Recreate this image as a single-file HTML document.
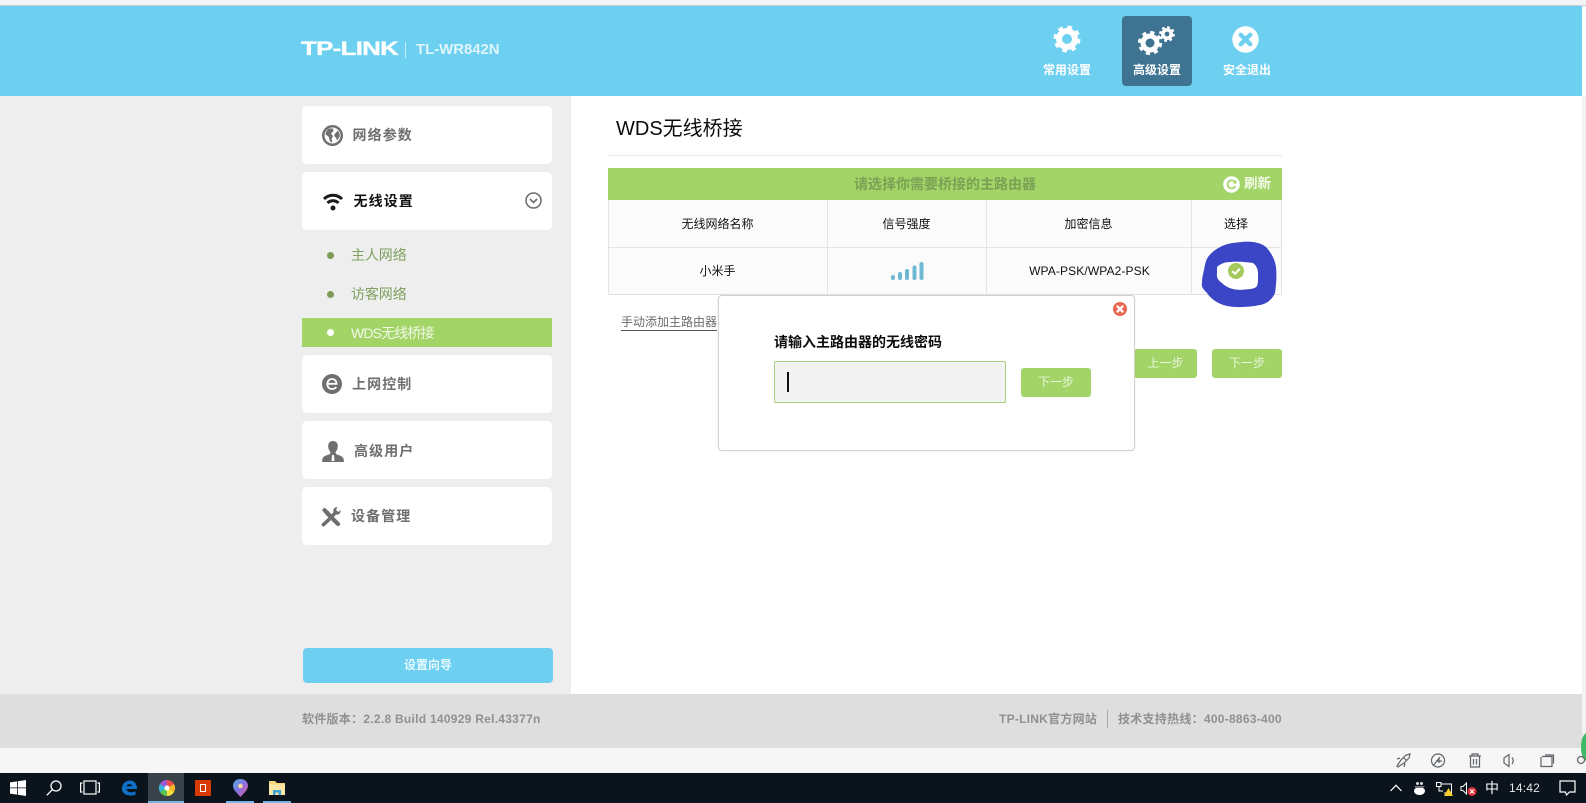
<!DOCTYPE html>
<html lang="zh">
<head>
<meta charset="utf-8">
<title>WDS</title>
<style>
html,body{margin:0;padding:0;width:1586px;height:803px;overflow:hidden;background:#fff}
body{position:relative;font-family:"Liberation Sans","Noto Sans CJK SC",sans-serif;color:#000}
.a{position:absolute;white-space:nowrap}
svg{position:absolute;overflow:visible}
.card{position:absolute;left:302px;width:250px;height:58px;background:#fff;border-radius:5px}
.mt{position:absolute;font-size:14px;font-weight:bold;letter-spacing:1.1px;color:#6f6f6f;line-height:20px;white-space:nowrap}
.sub{position:absolute;left:351px;font-size:14px;color:#7fa05f;line-height:20px;white-space:nowrap;letter-spacing:-.1px}
.dot{position:absolute;left:327px;width:7px;height:7px;border-radius:50%;background:#7c9c55}
.tab{position:absolute;font-size:12px;font-weight:bold;color:#fff;line-height:16px;white-space:nowrap;text-align:center;width:70px}
.th{position:absolute;font-size:12px;line-height:16px;text-align:center;color:#111}
.line{position:absolute;background:#e3e3e3}
.btn{position:absolute;background:#a2d468;border-radius:3px;color:#e9f6d9;font-size:12px;text-align:center}
</style>
</head>
<body>
<!-- top strip -->
<div class="a" style="left:0;top:0;width:1586px;height:5px;background:#f4f3f5"></div>
<div class="a" style="left:0;top:5px;width:1586px;height:1px;background:#c6ccd0"></div>
<!-- header -->
<div class="a" style="left:0;top:6px;width:1582px;height:90px;background:#6dd0f1"></div>
<div class="a" style="left:301px;top:39px;font-size:19px;line-height:22px;font-weight:bold;color:#fff;transform:scaleX(1.36);transform-origin:left center;letter-spacing:-.5px;-webkit-text-stroke:.3px #fff;font-family:'Liberation Sans',sans-serif">TP-LINK</div>
<div class="a" style="left:405px;top:42px;width:1px;height:16px;background:#c8eefa"></div>
<div class="a" style="left:416px;top:42px;font-size:14.9px;line-height:17px;font-weight:bold;color:#dff5fc;">TL-WR842N</div>

<div class="a" style="left:1122px;top:16px;width:70px;height:70px;background:#3e7391;border-radius:4px"></div>
<svg style="left:1053px;top:25px" width="28" height="28" viewBox="0 0 28 28"><circle cx="14" cy="14" r="8" fill="none" stroke="#fff" stroke-width="6"/><circle cx="14" cy="14" r="11.5" fill="none" stroke="#fff" stroke-width="4" stroke-dasharray="4.5 4.53"/></svg>
<svg style="left:1136px;top:26px" width="44" height="30" viewBox="0 0 44 30"><circle cx="14" cy="17" r="7" fill="none" stroke="#fff" stroke-width="5"/><circle cx="14" cy="17" r="10.4" fill="none" stroke="#fff" stroke-width="3.4" stroke-dasharray="4 4.17"/><circle cx="31" cy="8" r="4.2" fill="none" stroke="#fff" stroke-width="3.6"/><circle cx="31" cy="8" r="6.6" fill="none" stroke="#fff" stroke-width="2.6" stroke-dasharray="2.6 2.58"/></svg>
<svg style="left:1232px;top:26px" width="27" height="27" viewBox="0 0 27 27"><circle cx="13.5" cy="13.5" r="13.2" fill="#fff"/><path d="M8.8 8.8L18.2 18.2M18.2 8.8L8.8 18.2" stroke="#6dd0f1" stroke-width="4.4" stroke-linecap="round"/></svg>
<div class="tab" style="left:1032px;top:62px">常用设置</div>
<div class="tab" style="left:1122px;top:62px">高级设置</div>
<div class="tab" style="left:1212px;top:62px">安全退出</div>

<!-- sidebar -->
<div class="a" style="left:0;top:96px;width:571px;height:598px;background:#eeeeee"></div>
<div class="card" style="top:106px"></div>
<div class="card" style="top:172px"></div>
<div class="card" style="top:355px"></div>
<div class="card" style="top:421px"></div>
<div class="card" style="top:487px"></div>

<svg style="left:322px;top:125px" width="21" height="21" viewBox="0 0 21 21"><circle cx="10.5" cy="10.5" r="10.5" fill="#6f6f6f"/><circle cx="10.5" cy="10.5" r="8" fill="#fff"/><path d="M7 3.5L11 3.500L11.500 6L9 8.500L11 11L9.500 14L10.500 17.500L8 16.500L6.500 11.500L3.500 9.500C4 6.500 5 5 7 3.500ZM13 8.500L16 5.500C17.500 7.500 18 10 17.500 12L15 15.500L14 12.500L12 11Z" fill="#6f6f6f"/></svg>
<div class="mt" style="left:352.5px;top:125px">网络参数</div>

<svg style="left:323px;top:192px" width="20" height="19" viewBox="0 0 20 19"><path d="M1 7C6 2 14 2 19 7" fill="none" stroke="#1a1a1a" stroke-width="3"/><path d="M4.500 11C7.500 8 12.500 8 15.500 11" fill="none" stroke="#1a1a1a" stroke-width="3"/><circle cx="10" cy="16" r="2.500" fill="#1a1a1a"/></svg>
<div class="mt" style="left:353.5px;top:191px;color:#111">无线设置</div>
<svg style="left:525px;top:192px" width="17" height="17" viewBox="0 0 17 17"><circle cx="8.5" cy="8.5" r="7.5" fill="none" stroke="#6b6b6b" stroke-width="1.5"/><path d="M5 7L8.5 10.5L12 7" fill="none" stroke="#6b6b6b" stroke-width="1.6"/></svg>

<div class="dot" style="top:252px"></div>
<div class="sub" style="top:245px">主人网络</div>
<div class="dot" style="top:291px"></div>
<div class="sub" style="top:284px">访客网络</div>
<div class="a" style="left:302px;top:318px;width:250px;height:29px;background:#a2d468"></div>
<div class="dot" style="top:329px;background:#fff"></div>
<div class="sub" style="top:323px;color:#f2fae8;letter-spacing:-.85px">WDS无线桥接</div>

<svg style="left:322px;top:374px" width="20" height="20" viewBox="0 0 20 20"><circle cx="10" cy="10" r="10" fill="#6f6f6f"/><path d="M5.500 9.800H14.500C14.500 6.800 12.500 5 10 5C7.300 5 5.300 7.200 5.300 10C5.300 13 7.300 15 10 15C11.800 15 13.300 14.300 14.300 13" fill="none" stroke="#fff" stroke-width="1.800"/></svg>
<div class="mt" style="left:352px;top:374px">上网控制</div>

<svg style="left:322px;top:441px" width="22" height="21" viewBox="0 0 22 21"><path d="M11 0C14 0 15.800 2 15.800 5C15.800 8 14.500 10 13.500 11L14 13C16 14 20 14.500 21.500 17.500L22 21H0L.5 17.500C2 14.500 6 14 8 13L8.500 11C7.500 10 6.200 8 6.200 5C6.200 2 8 0 11 0Z" fill="#6f6f6f"/><path d="M10 14H12L12.500 20H9.500Z" fill="#fff"/></svg>
<div class="mt" style="left:354px;top:441px">高级用户</div>

<svg style="left:321px;top:507px" width="20" height="20" viewBox="0 0 20 20"><path d="M1 3L3.500 .5L8 4.500L11 8L18 15C19.500 16.500 19.500 17.500 18.500 18.500C17.500 19.500 16.500 19.500 15 18L8 11L4.500 7.500Z" fill="#6f6f6f"/><path d="M16.500 0C13.500 0 11.500 2.500 12.500 5L10 8L12.500 10.500L15 7.500C17.500 8.500 20 6 19.700 3L17.500 5L15 3ZM7.500 10.500L1.500 16C0 17.500 .5 18.500 1.200 19C2 19.700 3 19.800 4 18.700L10 13Z" fill="#6f6f6f"/></svg>
<div class="mt" style="left:351px;top:506px">设备管理</div>

<div class="a" style="left:303px;top:648px;width:250px;height:35px;background:#6dd0f1;border-radius:4px;color:#e9f9fe;font-size:12px;font-weight:bold;line-height:35px;text-align:center">设置向导</div>

<!-- main -->
<div class="a" style="left:616px;top:114px;font-size:20px;line-height:30px;color:#0a0a0a">WDS无线桥接</div>
<div class="a" style="left:608px;top:155px;width:674px;height:1px;background:#e8e8e8"></div>

<div class="a" style="left:608px;top:168px;width:674px;height:32px;background:#a2d468"></div>
<div class="a" style="left:608px;top:168px;width:674px;height:32px;line-height:32px;text-align:center;font-size:14px;font-weight:bold;color:#7ba153;">请选择你需要桥接的主路由器</div>
<svg style="left:1223px;top:176px" width="17" height="17" viewBox="0 0 17 17"><circle cx="8.5" cy="8.5" r="8.3" fill="#fff"/><path d="M12 6.200A4 4 0 1 0 12.300 10" fill="none" stroke="#a2d468" stroke-width="1.800"/><path d="M9.500 7.500H13.500V3.800Z" fill="#a2d468"/></svg>
<div class="a" style="left:1244px;top:175px;font-size:13.500px;line-height:18px;font-weight:bold;color:#f4fbe9">刷新</div>

<div class="a" style="left:608px;top:200px;width:674px;height:94px;background:#fbfbfb"></div>
<div class="line" style="left:608px;top:247px;width:674px;height:1px"></div>
<div class="line" style="left:608px;top:294px;width:674px;height:1px"></div>
<div class="line" style="left:608px;top:200px;width:1px;height:94px"></div>
<div class="line" style="left:827px;top:200px;width:1px;height:94px"></div>
<div class="line" style="left:986px;top:200px;width:1px;height:94px"></div>
<div class="line" style="left:1191px;top:200px;width:1px;height:94px"></div>
<div class="line" style="left:1281px;top:200px;width:1px;height:94px"></div>

<div class="th" style="left:608px;width:219px;top:216px">无线网络名称</div>
<div class="th" style="left:827px;width:159px;top:216px">信号强度</div>
<div class="th" style="left:986px;width:205px;top:216px">加密信息</div>
<div class="th" style="left:1191px;width:90px;top:216px">选择</div>
<div class="th" style="left:608px;width:219px;top:263px">小米手</div>
<div class="th" style="left:987px;width:205px;top:263px;letter-spacing:.12px">WPA-PSK/WPA2-PSK</div>

<svg style="left:891px;top:262px" width="33" height="18" viewBox="0 0 33 18"><g fill="#6fb9d3"><rect x="0" y="13" width="4" height="5" rx="2"/><rect x="7" y="10" width="4" height="8" rx="2"/><rect x="14" y="7" width="4" height="11" rx="2"/><rect x="21.500" y="3.500" width="4" height="14.500" rx="2"/><rect x="28.500" y="0" width="4" height="18" rx="2"/></g></svg>

<svg style="left:1200px;top:240px" width="78" height="70" viewBox="0 0 78 70"><path d="M4 30C5 24 6 20 8 17C14 9 24 4 33 3C40 2 47 1 53 2C60 3 64 5 67 8C72 14 75 20 76 27C77 36 76 46 75 53C72 60 66 64 60 65C50 67 38 68 27 66C18 64 11 59 7 53C4 50 1 47 2 43C2 38 3 34 4 30Z" fill="#3b46c7"/><path d="M17 27C20 24 25 22 30 22C37 21 46 22 53 23C56 25 58 29 58 33C58 38 58.500 42 57 46C55 49 50 49 45 49.500C41 50 36 50 33 49C29 48 25 46 22 43C19 41 16 38 17 33Z" fill="#fff"/></svg>
<svg style="left:1228px;top:263px" width="16" height="16" viewBox="0 0 16 16"><circle cx="8" cy="8" r="8" fill="#a5ca5c"/><path d="M4.200 8.200L7 10.800L11.800 5.800" fill="none" stroke="#fff" stroke-width="2"/></svg>

<div class="a" style="left:621px;top:314px;font-size:12px;line-height:16px;color:#6b6b6b;border-bottom:1px solid #555;height:16px;width:96px">手动添加主路由器</div>

<div class="btn" style="left:1134px;top:349px;width:63px;height:29px;line-height:29px">上一步</div>
<div class="btn" style="left:1212px;top:349px;width:70px;height:29px;line-height:29px">下一步</div>

<!-- dialog -->
<div class="a" style="left:718px;top:295px;height:156px;background:#fff;border:1px solid #d2d2d2;border-radius:4px;box-sizing:border-box;width:417px;box-shadow:0 0 2px rgba(0,0,0,.08)"></div>
<svg style="left:1113px;top:302px" width="14" height="14" viewBox="0 0 14 14"><circle cx="7" cy="7" r="7" fill="#e9674e"/><path d="M4.500 4.500L9.500 9.500M9.500 4.500L4.500 9.500" stroke="#fff" stroke-width="2.400" stroke-linecap="round"/></svg>
<div class="a" style="left:774px;top:333px;font-size:14px;line-height:18px;font-weight:bold;color:#0c0c0c">请输入主路由器的无线密码</div>
<div class="a" style="left:774px;top:361px;width:232px;height:42px;box-sizing:border-box;background:#f3f3f3;border:1px solid #a9cf7a;border-radius:2px"></div>
<div class="a" style="left:787px;top:372px;width:1.500px;height:20px;background:#111"></div>
<div class="btn" style="left:1021px;top:368px;width:70px;height:29px;line-height:29px">下一步</div>

<!-- footer -->
<div class="a" style="left:0;top:694px;width:1582px;height:54px;background:#dedede"></div>
<div class="a" style="left:302px;top:711px;font-size:12px;line-height:16px;font-weight:bold;color:#909090;letter-spacing:.27px">软件版本：2.2.8 Build 140929 Rel.43377n</div>
<div class="a" style="left:999px;top:711px;font-size:12px;line-height:16px;font-weight:bold;color:#909090;letter-spacing:.25px">TP-LINK官方网站</div>
<div class="a" style="left:1107px;top:710px;width:1px;height:18px;background:#a8a8a8"></div>
<div class="a" style="left:1118px;top:711px;font-size:12px;line-height:16px;font-weight:bold;color:#909090;letter-spacing:.27px">技术支持热线：400-8863-400</div>

<!-- bottom toolbar -->
<div class="a" style="left:0;top:748px;width:1586px;height:25px;background:#f6f6f6"></div>
<div class="a" style="left:1582px;top:96px;width:4px;height:652px;background:#f2f2f2"></div>
<svg style="left:1581px;top:733px" width="5" height="30" viewBox="0 0 5 30"><path d="M5 0C1 3 0 8 0 14C0 20 1 24 5 28Z" fill="#3fb965"/></svg>
<svg style="left:1394px;top:752px" width="190" height="17" viewBox="0 0 190 17" fill="none" stroke="#5f6468" stroke-width="1.200">
<path d="M3 14L7 8L12 3L16 2L15 6L10 11L4 15ZM6 6L3 7M11 11L10 15M9 5L13 9"/>
<circle cx="44" cy="8.500" r="6.500"/><path d="M39 14L46 5M42 9H48M45 6V11"/>
<path d="M75 4H87M78 4V2H84V4M76.500 4.500V15H85.500V4.500M79.500 7V12.500M82.500 7V12.500"/>
<path d="M110 6V11L115 14.500V2.500ZM118 5.500C119.500 7.500 119.500 10 118 12"/>
<path d="M148 4.500H158V14.500H147V5M151 3H159.500V11.500"/>
<circle cx="187" cy="8" r="3.500"/>
</svg>

<!-- taskbar -->
<div class="a" style="left:0;top:773px;width:1586px;height:30px;background:#0b141c"></div>
<div class="a" style="left:148px;top:773px;width:36px;height:30px;background:#3a4249"></div>
<div class="a" style="left:148px;top:801px;width:36px;height:2px;background:#75b4e4"></div>
<div class="a" style="left:226px;top:801px;width:28px;height:2px;background:#75b4e4"></div>
<div class="a" style="left:263px;top:801px;width:28px;height:2px;background:#75b4e4"></div>

<svg style="left:10px;top:780px" width="16" height="16" viewBox="0 0 16 16" fill="#fff"><path d="M0 2.400L7 1.400V7.500H0ZM7.800 1.300L16 0V7.500H7.800ZM0 8.300H7V14.600L0 13.600ZM7.800 8.300H16V16L7.800 14.800Z"/></svg>
<svg style="left:46px;top:780px" width="16" height="16" viewBox="0 0 16 16" fill="none" stroke="#fff" stroke-width="1.300"><circle cx="10" cy="6" r="5"/><path d="M6.300 9.700L.8 15.300"/></svg>
<svg style="left:80px;top:780px" width="20" height="15" viewBox="0 0 20 15" fill="none" stroke="#fff" stroke-width="1.200"><rect x="4" y="1" width="12" height="13"/><path d="M2.500 3H.6V12H2.500M17.500 3H19.400V12H17.500"/></svg>
<svg style="left:121px;top:780px" width="16" height="16" viewBox="0 0 16 16"><path d="M1 9C1 3 5 .5 9 .5C13 .5 16 3.500 16 9H5.500C5.800 12 9.500 13.500 14.500 11.300V14.800C8 17 1 14.500 1 9ZM5.600 6.200H11.200C11 3.500 6.300 3.400 5.600 6.200Z" fill="#0f6fc6"/></svg>
<svg style="left:159px;top:780px" width="16" height="16" viewBox="0 0 16 16"><path d="M8 8L8 0A8 8 0 0 1 15 4Z" fill="#f04e4e"/><path d="M8 8L15 4A8 8 0 0 1 15 12Z" fill="#f5b62a"/><path d="M8 8L15 12A8 8 0 0 1 8 16Z" fill="#f7df3d"/><path d="M8 8L8 16A8 8 0 0 1 1 12Z" fill="#5dc450"/><path d="M8 8L1 12A8 8 0 0 1 1 4Z" fill="#37b5d8"/><path d="M8 8L1 4A8 8 0 0 1 8 0Z" fill="#a05ad6"/><circle cx="8" cy="8" r="2.500" fill="#fff"/></svg>
<div class="a" style="left:195px;top:780px;width:16px;height:16px;background:#d83b01"></div>
<div class="a" style="left:200px;top:784px;width:6px;height:8px;border:1.500px solid #fff;box-sizing:border-box;"></div>
<svg style="left:233px;top:779px" width="15" height="18" viewBox="0 0 15 18"><defs><linearGradient id="mp" x1="0" y1="0" x2="1" y2="1"><stop offset="0" stop-color="#4fb3e8"/><stop offset=".5" stop-color="#8a6fe0"/><stop offset="1" stop-color="#ef5f8f"/></linearGradient></defs><path d="M7.500 0C12 0 15 3 15 7C15 11 10 15 7.500 18C5 15 0 11 0 7C0 3 3 0 7.500 0Z" fill="url(#mp)"/><circle cx="7.500" cy="7" r="2.300" fill="#f5d9a0"/></svg>
<svg style="left:269px;top:781px" width="16" height="14" viewBox="0 0 16 14"><path d="M0 0H6L8 2H16V14H0Z" fill="#f4d67a"/><rect x="0" y="3.500" width="16" height="10.500" fill="#fbe7a6"/><path d="M4 9H12V14H9.500V11.500H6.500V14H4Z" fill="#3aa3d6"/></svg>

<svg style="left:1390px;top:784px" width="12" height="8" viewBox="0 0 12 8" fill="none" stroke="#fff" stroke-width="1.200"><path d="M.5 7L6 1.300L11.500 7"/></svg>
<svg style="left:1413px;top:781px" width="13" height="15" viewBox="0 0 13 15"><ellipse cx="6.500" cy="10" rx="5.500" ry="4" fill="#fff"/><circle cx="4.500" cy="2.500" r="1.500" fill="#ddd"/><circle cx="8.500" cy="2.500" r="1.500" fill="#ddd"/><path d="M1 5H12L10 7H3Z" fill="#777"/></svg>
<svg style="left:1436px;top:782px" width="17" height="14" viewBox="0 0 17 14" fill="none" stroke="#fff" stroke-width="1"><rect x=".5" y=".5" width="4.500" height="4"/><path d="M5 2H15.500V11H8M3 5V9H7"/><path d="M12.500 6L17 14H8Z" fill="#f7cf2a" stroke="none"/></svg>
<svg style="left:1460px;top:782px" width="17" height="14" viewBox="0 0 17 14"><path d="M1 4.500V8.500H3L6.500 12V1L3 4.500Z" fill="none" stroke="#fff"/><circle cx="12" cy="9.500" r="4.500" fill="#e0303a"/><path d="M10 7.500L14 11.500M14 7.500L10 11.500" stroke="#fff" stroke-width="1.200"/></svg>
<div class="a" style="left:1485px;top:779px;font-size:14px;line-height:18px;color:#fff">中</div>
<div class="a" style="left:1509px;top:780px;font-size:12px;line-height:16px;color:#e6e8ea;letter-spacing:.2px">14:42</div>
<svg style="left:1559px;top:780px" width="17" height="16" viewBox="0 0 17 16" fill="none" stroke="#fff" stroke-width="1.200"><path d="M1 1H16V12H10.500L7.500 15L6.500 12H1Z"/></svg>
</body>
</html>
